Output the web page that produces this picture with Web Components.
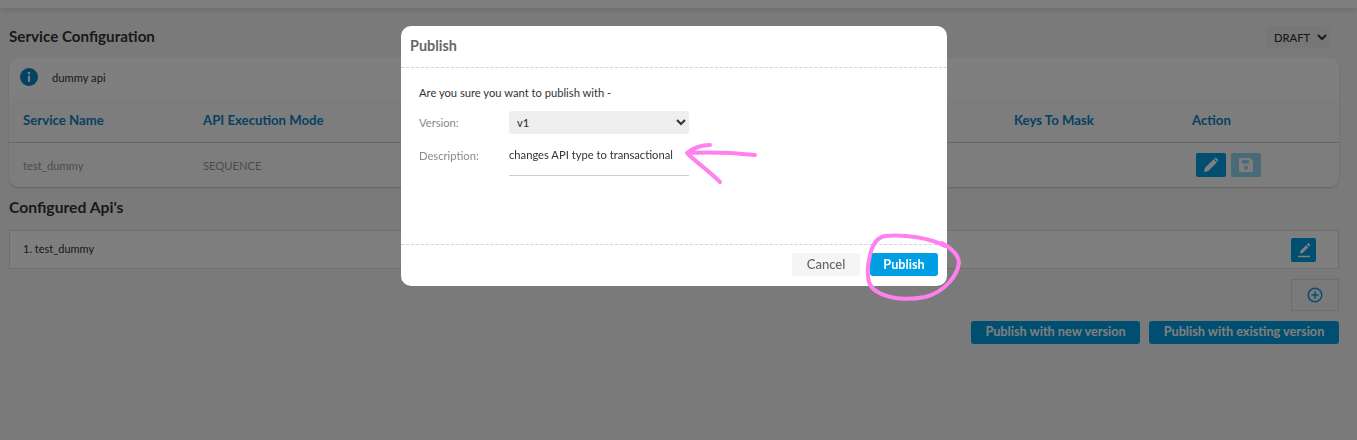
<!DOCTYPE html>
<html lang="en">
<head>
<meta charset="utf-8">
<title>Service Configuration</title>
<style>
  html, body { margin: 0; height: 100%; }
  body { background: #f5f5f5; color: #333; font-family: Lato, "Open Sans", sans-serif; overflow: hidden; }
</style>
</head>
<body>
<service-page></service-page>
<publish-modal></publish-modal>
<ink-marks></ink-marks>

<script>
/**
 * Icon button used in the table and the api list
 */
class IconButton extends HTMLElement {
  constructor() {
    super();
    this.attachShadow({ mode: 'open' });
    this.shadowRoot.innerHTML = `
      <style>
        :host {
          display: inline-flex;
          align-items: center;
          justify-content: center;
          width: var(--w, 30px);
          height: 24px;
          border-radius: 2px;
          background: #009ee3;
        }
        :host([disabled]) { opacity: .4; }
        ::slotted(svg) { display: block; fill: #fff; }
      </style>
      <slot></slot>
    `;
  }
}

/**
 * The page behind the dialog
 */
class ServicePage extends HTMLElement {
  constructor() {
    super();
    this.attachShadow({ mode: 'open' });
    this.shadowRoot.innerHTML = `
      <style>
        :host { display: block; }
        .topbar {
          height: 8px;
          background: #fff;
          box-shadow: 0 2px 6px rgba(0,0,0,.12);
        }
        .content { padding: 0 18px 0 9px; }
        .title-row {
          display: flex;
          align-items: center;
          justify-content: space-between;
          height: 50px;
          padding-right: 9px;
        }
        h2 {
          margin: 0;
          font-size: 15.2px;
          font-weight: 700;
          line-height: 20px;
          color: #333;
        }
        .title-row h2 { margin-top: 5px; }
        .status {
          margin-top: 8px;
          width: 64px;
          height: 23px;
          box-sizing: border-box;
          padding: 0 4px;
          border: 0;
          border-radius: 4px;
          background: #efefef;
          color: #333;
          font: 500 11.2px Lato, sans-serif;
        }
        .card {
          background: #fff;
          border-radius: 9px;
          box-shadow: 0 1px 2px rgba(0,0,0,.2);
          height: 129px;
          display: flex;
          flex-direction: column;
          color: #333;
          overflow: hidden;
        }
        .info {
          height: 40px;
          display: flex;
          align-items: center;
          gap: 14px;
          padding: 0 0 2px 11px;
          font-size: 11.2px;
          box-sizing: border-box;
        }
        .info svg { display: block; }
        .cols {
          display: grid;
          grid-template-columns: 180px 811px 178px 1fr;
          padding-left: 14px;
          align-items: center;
          background: #fafafa;
        }
        .head {
          height: 44px;
          font-size: 13.2px;
          font-weight: 700;
          color: #0b83c4;
          border-bottom: 1px solid #ccc;
        }
        .row {
          flex: 1;
          font-size: 11.2px;
          color: #999;
        }
        .actions { display: flex; gap: 5px; margin-left: 4px; }
        .config-title { margin: 10px 0 13px; font-size: 15.7px; }
        .api {
          height: 39px;
          box-sizing: border-box;
          border: 1px solid #ddd;
          background: #fff;
          display: flex;
          align-items: center;
          justify-content: space-between;
          padding: 0 22px 0 13px;
          font-size: 11px;
        }
        .api > span { margin-bottom: 3px; }
        .add-row {
          display: flex;
          justify-content: flex-end;
          margin-top: 10px;
        }
        .add {
          width: 48px;
          height: 32px;
          box-sizing: border-box;
          border: 1px solid #ddd;
          display: flex;
          align-items: center;
          justify-content: center;
        }
        .publish-row {
          display: flex;
          justify-content: flex-end;
          gap: 9px;
          margin-top: 10px;
        }
        .publish-row span {
          height: 23px;
          line-height: 21px;
          border-radius: 3px;
          background: #009ee3;
          color: #fff;
          font-size: 12.7px;
          font-weight: 700;
          text-align: center;
        }
        .new { width: 169px; }
        .existing { width: 190px; }
      </style>
      <div class="topbar"></div>
      <div class="content">
        <div class="title-row">
          <h2>Service Configuration</h2>
          <select class="status"><option>DRAFT</option></select>
        </div>
        <div class="card">
          <div class="info">
            <svg width="18" height="18" viewBox="0 0 18 18">
              <circle cx="9" cy="9" r="9" fill="#0b83c4"/>
              <circle cx="9" cy="5" r="1.3" fill="#fff"/>
              <rect x="7.9" y="7.4" width="2.2" height="6.4" rx=".5" fill="#fff"/>
            </svg>
            <span>dummy api</span>
          </div>
          <div class="cols head">
            <span>Service Name</span>
            <span>API Execution Mode</span>
            <span>Keys To Mask</span>
            <span>Action</span>
          </div>
          <div class="cols row">
            <span>test_dummy</span>
            <span>SEQUENCE</span>
            <span></span>
            <div class="actions">
              <icon-button>
                <svg width="16" height="16" viewBox="0 0 16 16"><path d="M1 15l.8-4L10.600 2.200l3.200 3.200L5 14.200zM11.600 1.200c.6-.6 1.400-.6 2 0l1.200 1.200c.6.6.6 1.400 0 2l-.4.400-3.200-3.200z"/></svg>
              </icon-button>
              <icon-button disabled>
                <svg width="16" height="16" viewBox="0 0 16 16"><path fill-rule="evenodd" d="M2.500 1H12l3 3v9.500a1.500 1.500 0 0 1-1.500 1.500h-11A1.500 1.500 0 0 1 1 13.500v-11A1.500 1.500 0 0 1 2.500 1zM4 3v3.500h7V3zm4 5.800a2 2 0 1 0 0 4 2 2 0 0 0 0-4z"/></svg>
              </icon-button>
            </div>
          </div>
        </div>
        <h2 class="config-title">Configured Api's</h2>
        <div class="api">
          <span>1. test_dummy</span>
          <icon-button style="--w:25px">
            <svg width="16" height="16" viewBox="0 0 16 16"><path d="M2 13.800h12v1.400H2zM4 11.400l.5-2.700 5.700-5.700 2.200 2.200-5.700 5.700zM10.900 2.300l.9-.9c.4-.4.9-.4 1.300 0l.9.9c.4.400.4.900 0 1.300l-.9.9z"/></svg>
          </icon-button>
        </div>
        <div class="add-row">
          <div class="add">
            <svg width="16" height="16" viewBox="0 0 16 16" fill="none" stroke="#009ee3" stroke-width="1.500">
              <circle cx="8" cy="8" r="6.800"/>
              <path d="M4.500 8h7M8 4.500v7"/>
            </svg>
          </div>
        </div>
        <div class="publish-row">
          <span class="new">Publish with new version</span>
          <span class="existing">Publish with existing version</span>
        </div>
      </div>
    `;
  }
}

/**
 * The Publish dialog with its backdrop
 */
class PublishModal extends HTMLElement {
  constructor() {
    super();
    this.attachShadow({ mode: 'open' });
    this.shadowRoot.innerHTML = `
      <style>
        :host {
          position: fixed;
          inset: 0;
          display: block;
          background: rgba(0,0,0,.5);
        }
        .dialog {
          position: absolute;
          left: 401px;
          top: 26px;
          width: 546px;
          height: 260px;
          display: flex;
          flex-direction: column;
          background: #fff;
          border-radius: 10px;
          color: #333;
        }
        header {
          height: 42px;
          box-sizing: border-box;
          border-bottom: 1px dashed #d4d4d4;
          padding: 0 9px 2px;
          display: flex;
          align-items: center;
          font-size: 14.4px;
          font-weight: 700;
          color: #666;
        }
        main {
          flex: 1;
          padding: 18px 18px 0;
          font-size: 11.2px;
        }
        p { margin: 0 0 11px; line-height: 14px; }
        .field {
          display: grid;
          grid-template-columns: 90px 180px;
          align-items: start;
          margin-bottom: 10px;
        }
        label { color: #8a8a8a; line-height: 23px; }
        select {
          height: 23px;
          box-sizing: border-box;
          border: 0;
          border-radius: 3px;
          background: #eee;
          color: #333;
          padding: 0 4px;
          font: 500 11.2px Lato, sans-serif;
        }
        .value {
          height: 32px;
          line-height: 22px;
          box-sizing: border-box;
          border-bottom: 1px solid #ccc;
          color: #333;
          white-space: nowrap;
        }
        footer {
          height: 42px;
          box-sizing: border-box;
          border-top: 1px dashed #d4d4d4;
          display: flex;
          align-items: center;
          justify-content: flex-end;
          gap: 10px;
          padding: 0 9px 3px 0;
        }
        footer span {
          width: 68px;
          height: 23px;
          line-height: 23px;
          text-align: center;
          border-radius: 3px;
          font-size: 13px;
        }
        .cancel { background: #f5f5f5; color: #666; font-weight: 500; }
        .ok { background: #009ee3; color: #fff; font-weight: 700; font-size: 12.7px; }
      </style>
      <div class="dialog">
        <header>Publish</header>
        <main>
          <p>Are you sure you want to publish with -</p>
          <div class="field">
            <label>Version:</label>
            <select><option>v1</option></select>
          </div>
          <div class="field">
            <label>Description:</label>
            <div class="value">changes API type to transactional</div>
          </div>
        </main>
        <footer>
          <span class="cancel">Cancel</span>
          <span class="ok">Publish</span>
        </footer>
      </div>
    `;
  }
}

/**
 * Pink pen marks drawn over the screenshot
 */
class InkMarks extends HTMLElement {
  constructor() {
    super();
    this.attachShadow({ mode: 'open' });
    this.shadowRoot.innerHTML = `
      <style>
        :host { position: fixed; inset: 0; display: block; pointer-events: none; }
        svg { display: block; }
        path { fill: none; stroke: #ff80ee; stroke-width: 4; stroke-linecap: round; stroke-linejoin: round; }
      </style>
      <svg width="1357" height="440" viewBox="0 0 1357 440">
        <path d="M755 155C735 153 710 152 687 153C692 149 700 145 710 145M687 153C697 163 708 170 720 182"/>
        <path d="M945 246C930 238 905 234 885 236C874 238 870 250 868 267C867 280 869 286 876 291C890 300 910 300 925 297C945 292 958 275 959 262C958 255 951 248 942 243"/>
      </svg>
    `;
  }
}

customElements.define('icon-button', IconButton);
customElements.define('service-page', ServicePage);
customElements.define('publish-modal', PublishModal);
customElements.define('ink-marks', InkMarks);
</script>
</body>
</html>
